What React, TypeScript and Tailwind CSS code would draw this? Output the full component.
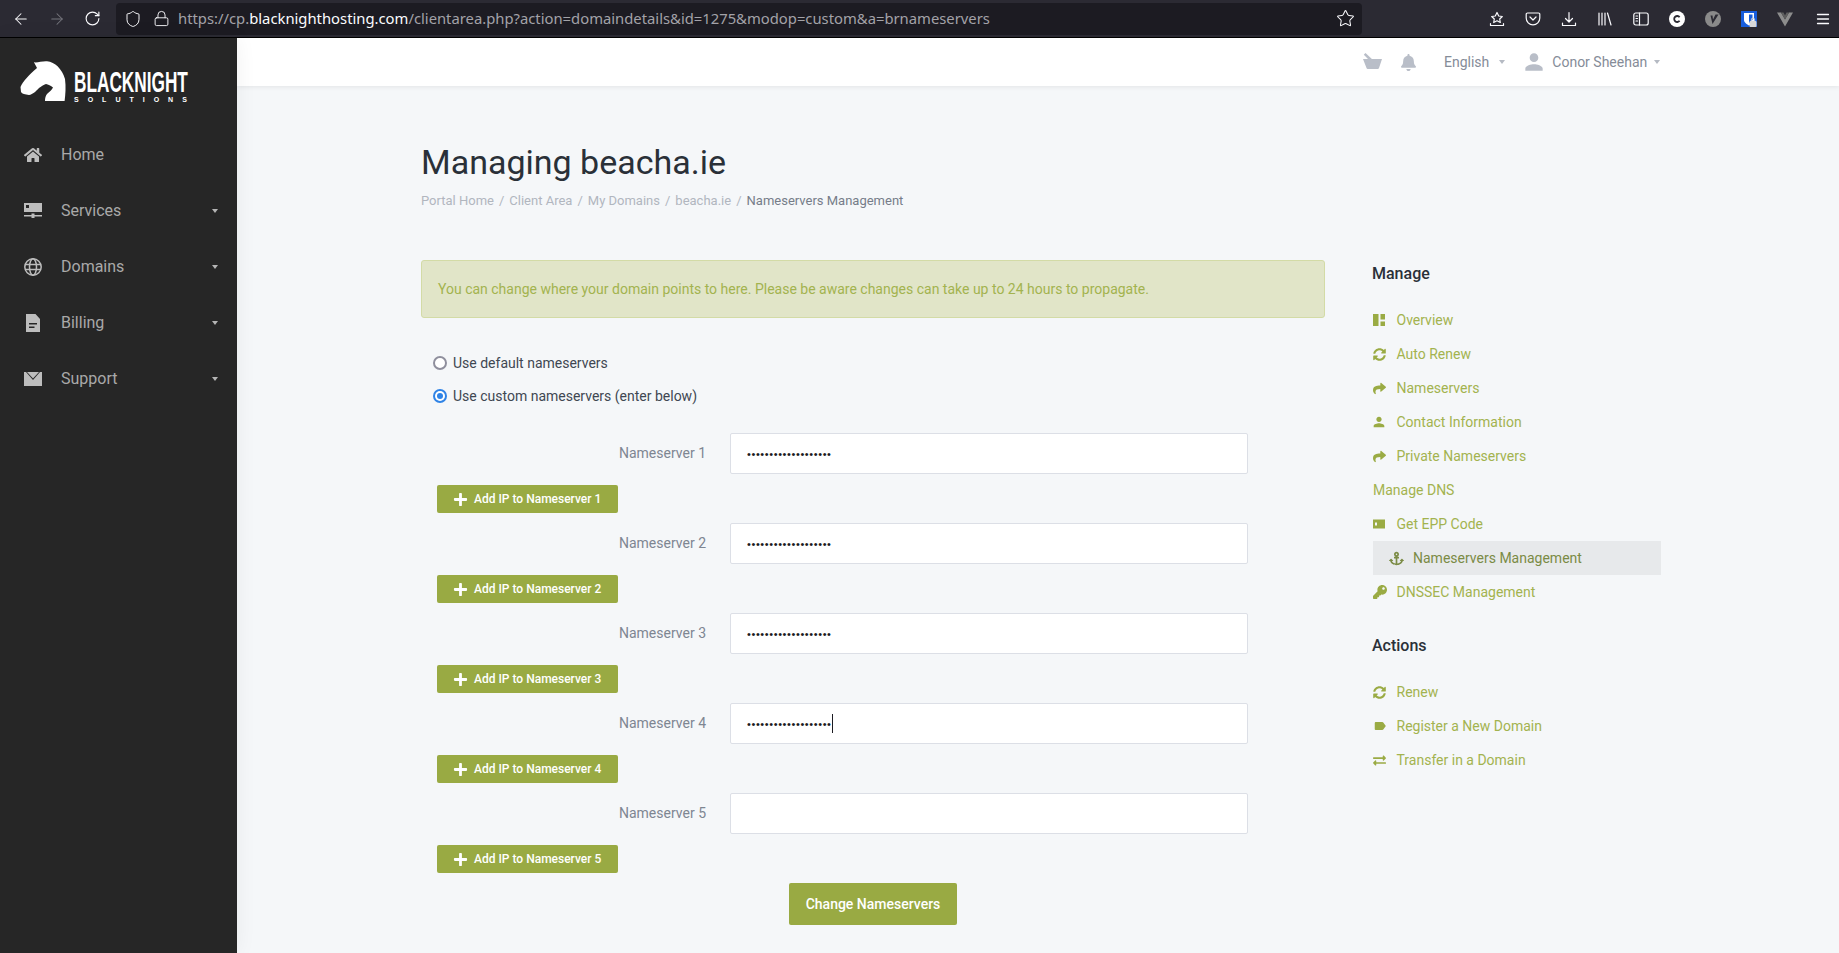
import React from "react";
import { ArrowLeft, ArrowRight, RotateCw, Shield, Lock, Star } from "lucide-react";
import { FaHome, FaBell, FaPlus, FaAnchor, FaKey, FaShare, FaExchangeAlt, FaSyncAlt } from "react-icons/fa";
import { MdPerson, MdLabel } from "react-icons/md";

const Caret = ({ c = "border-t-[#b5bac3]" }: { c?: string }) => (
  <span className={`inline-block w-0 h-0 border-x-[3px] border-t-[4px] border-x-transparent ${c}`} />
);

const TB = ({ children, cls = "" }: { children: React.ReactNode; cls?: string }) => (
  <svg viewBox="0 0 16 16" width="16" height="16" fill="none" stroke="#fbfbfe" strokeWidth="1.2" strokeLinecap="round" strokeLinejoin="round" className={cls}>
    {children}
  </svg>
);

function Toolbar() {
  return (
    <div className="h-[38px] bg-[#2b2a33] border-b border-black flex items-center shrink-0">
      <div className="w-[116px] flex items-center pl-[12px] gap-[18px] shrink-0">
        <ArrowLeft size={18} color="#fbfbfe" strokeWidth={1.4} />
        <ArrowRight size={18} color="#77767e" strokeWidth={1.4} />
        <RotateCw size={17} color="#fbfbfe" strokeWidth={1.6} />
      </div>
      <div className="w-[1246px] h-[32px] bg-[#1c1b22] rounded-[4px] flex items-center pl-[8px] shrink-0">
        <Shield size={18} color="#fbfbfe" strokeWidth={1.3} />
        <Lock size={17} color="#fbfbfe" strokeWidth={1.3} className="ml-[11px]" />
        <span className="ml-[8px] text-[14.8px] text-[#a3a2a8] [font-family:'Noto_Sans',sans-serif] whitespace-nowrap">
          https://cp.<span className="text-[#fbfbfe]">blacknighthosting.com</span>/clientarea.php?action=domaindetails&amp;id=1275&amp;modop=custom&amp;a=brnameservers
        </span>
        <span className="ml-auto mr-[7px]"><Star size={19} color="#fbfbfe" strokeWidth={1.3} /></span>
      </div>
      <div className="flex items-center ml-[127px] gap-[20px]">
        <TB>
          <path d="M8 1.500l1.700 3.500 3.600.5-2.600 2.500.6 3.500L8 9.800 4.700 11.500l.6-3.500L2.700 5.500l3.600-.5z" />
          <path d="M1.500 12.500v2h13v-2" />
        </TB>
        <TB>
          <path d="M2.500 2h11a1.300 1.300 0 0 1 1.300 1.300V7a6.800 6.800 0 0 1-13.600 0V3.300A1.300 1.300 0 0 1 2.500 2z" />
          <path d="M5 6l3 3 3-3" />
        </TB>
        <TB>
          <path d="M8 1.500v9M4.500 7.500L8 11l3.500-3.500" />
          <path d="M1.500 12v2.500h13V12" />
        </TB>
        <TB>
          <path d="M2 2v12M5 2v12M8 2v12M10.500 2l3.500 12" />
        </TB>
        <TB>
          <rect x="0.800" y="2" width="14.400" height="12" rx="2" />
          <path d="M6.500 2v12M3 5h1.500M3 7.500h1.500M3 10h1.500" />
        </TB>
        <svg viewBox="0 0 16 16" width="16" height="16">
          <circle cx="8" cy="8" r="8" fill="#fff" />
          <path d="M10.600 6.200A3 3 0 1 0 10.600 9.800" fill="none" stroke="#2b2a33" strokeWidth="1.800" />
        </svg>
        <svg viewBox="0 0 16 16" width="16" height="16">
          <circle cx="8" cy="8" r="8" fill="#8a8a8a" />
          <path d="M5.500 4.500 7.500 13 13.500 3.500H10.500L8 8.500 7.500 4.500z" fill="#2b2a33" />
        </svg>
        <svg viewBox="0 0 16 16" width="16" height="16">
          <rect width="16" height="16" fill="#175ddc" />
          <path d="M3 2h10v7c0 2.500-3 4.500-5 5.500-2-1-5-3-5-5.500z" fill="#fff" />
          <path d="M8 3.500h3.500V9L8 12z" fill="#175ddc" />
          <rect x="8.500" y="10" width="7" height="6" rx="1" fill="#d8d8d8" />
          <path d="M10.300 10V8.800a1.700 1.700 0 0 1 3.400 0V10" fill="none" stroke="#d8d8d8" strokeWidth="1" />
        </svg>
        <svg viewBox="0 0 16 16" width="16" height="16">
          <path d="M0 1.500h4l4 7 4-7h4L8 15.500z" fill="#8d8d8d" />
          <path d="M4 1.500h2.500L8 4.500l1.500-3H12L8 8.500z" fill="#5f5f5f" />
        </svg>
        <svg viewBox="0 0 16 16" width="16" height="16" className="ml-[2px]" stroke="#fbfbfe" strokeWidth="1.300" strokeLinecap="round">
          <path d="M2.500 3.500h11M2.500 8h11M2.500 12.500h11" />
        </svg>
      </div>
    </div>
  );
}

function Logo() {
  return (
    <svg viewBox="0 0 185 42" width="185" height="42" className="ml-[20px] mt-[23px]" aria-label="Blacknight Solutions">
      <path
        d="M0.500 26 C3 20 9 14 17 7 C15.500 4 14.500 2.500 14 1.300 C18 1.800 22 0 27 0.300 C35 1 42 8 45 18 C46 26 45.500 33 44.600 40 L25 40 C25 37 25.500 35 27 33 C29 31 32 29 33 26.500 C31 24.500 28 23.500 26 23 C23.500 24 21 25.500 19 27 C16 30 13 33.500 9 34 C5 33.500 2 33 1 31 Z"
        fill="#fff"
      />
      <text transform="translate(54 31) scale(0.594 1)" fontFamily="'Liberation Sans',sans-serif" fontWeight="700" fontSize="29" fill="#fff">
        BLACKNIGHT
      </text>
      <text x="54" y="40.500" letterSpacing="9" fontFamily="'Liberation Sans',sans-serif" fontWeight="700" fontSize="7" fill="#fff">
        SOLUTIONS
      </text>
    </svg>
  );
}

const navIcon = "w-[18px] h-[18px] text-[#bdbdbd] shrink-0";
const nav = [
  { label: "Home", caret: false, icon: <FaHome className={navIcon} /> },
  {
    label: "Services",
    caret: true,
    icon: (
      <svg viewBox="0 0 18 18" className={navIcon} fill="currentColor">
        <path d="M0 1h18v9H0z" />
        <rect x="2" y="3" width="3" height="3" fill="#262626" />
        <path d="M0 13h18v1.500H0z" />
        <rect x="7.500" y="11.500" width="3" height="4.500" />
      </svg>
    ),
  },
  {
    label: "Domains",
    caret: true,
    icon: (
      <svg viewBox="0 0 18 18" className={navIcon} fill="none" stroke="currentColor" strokeWidth="1.500">
        <circle cx="9" cy="9" r="8.200" />
        <ellipse cx="9" cy="9" rx="3.500" ry="8.200" />
        <path d="M1 6.500h16M1 11.500h16" />
      </svg>
    ),
  },
  {
    label: "Billing",
    caret: true,
    icon: (
      <svg viewBox="0 0 18 18" className={navIcon} fill="currentColor">
        <path fillRule="evenodd" d="M2 0h9.500L16 5v13H2zM5 9v1.500h8V9zM5 12.500V14h5.500v-1.500z" />
      </svg>
    ),
  },
  {
    label: "Support",
    caret: true,
    icon: (
      <svg viewBox="0 0 18 18" className={navIcon} fill="currentColor">
        <path d="M0 2h2l7 8 7-8h2v14H0z" />
        <path d="M3 2h12l-6 6.500z" />
      </svg>
    ),
  },
];

function Sidebar() {
  return (
    <aside className="w-[237px] shrink-0 bg-[#262626] flex flex-col z-10 shadow-[0_0_20px_rgba(0,0,0,0.06)]">
      <Logo />
      <nav className="mt-[24px]">
        {nav.map((n) => (
          <div key={n.label} className="h-[56px] flex items-center pl-[24px] pr-[19px]">
            {n.icon}
            <span className="ml-[19px] text-[16px] text-[#a9a9a9]">{n.label}</span>
            {n.caret && (
              <span className="ml-auto flex">
                <Caret c="border-t-[#b5b5b5]" />
              </span>
            )}
          </div>
        ))}
      </nav>
    </aside>
  );
}

function Header() {
  return (
    <header className="h-[48px] bg-white shrink-0 z-[5] shadow-[0_1px_5px_rgba(0,0,0,0.08)] flex items-center pl-[1126px] text-[14px] text-[#858c98]">
      <svg viewBox="0 0 19 16" width="19" height="16" fill="#b9bec8" className="shrink-0 mt-[-2px]">
        <path d="M0 6h19l-3 9a1.500 1.500 0 0 1-1.500 1h-9.500a1.500 1.500 0 0 1-1.500-1z" />
        <path d="M2.500 0 11 8 9 10 0.800 1.800z" />
      </svg>
      <FaBell className="ml-[18px] text-[#b9bec8] shrink-0" size={17} />
      <span className="ml-[27px]">English</span>
      <span className="ml-[10px] flex"><Caret /></span>
      <MdPerson className="ml-[16px] text-[#b9bec8] shrink-0" size={26} />
      <span className="ml-[5px]">Conor Sheehan</span>
      <span className="ml-[7px] flex"><Caret /></span>
    </header>
  );
}

const Radio = ({ on, label }: { on?: boolean; label: string }) => (
  <div className="h-[33px] flex items-center pl-[12px]">
    {on ? (
      <span className="relative -top-px w-[14px] h-[14px] rounded-full bg-[#2f83e6] flex items-center justify-center">
        <span className="w-[10px] h-[10px] rounded-full bg-white flex items-center justify-center">
          <span className="w-[6px] h-[6px] rounded-full bg-[#2f83e6]" />
        </span>
      </span>
    ) : (
      <span className="relative -top-px w-[14px] h-[14px] rounded-full border-2 border-[#8f8f9d] bg-white" />
    )}
    <span className="ml-[6px] text-[14px] text-[#3f4752]">{label}</span>
  </div>
);

function NsRow({ n, filled, caret }: { n: number; filled: boolean; caret?: boolean }) {
  return (
    <div>
      <div className="flex items-center h-[41px]">
        <label className="w-[285px] text-right text-[14px] text-[#7e8692]">Nameserver {n}</label>
        <div className="relative ml-[24px] w-[518px] h-[41px]">
          <input
            type="password"
            readOnly
            defaultValue={filled ? "ns1.blacknight.com." : ""}
            className="w-full h-full bg-white border border-[#dcdfe6] rounded-[2px] pl-[16px] text-[11px] tracking-[0.6px] text-[#1c1b22] outline-none [font-family:'Liberation_Sans',sans-serif]"
          />
          {caret && <span className="absolute left-[102px] top-[11px] w-px h-[19px] bg-[#1c1b22]" />}
        </div>
      </div>
      <button className="ml-[16px] mt-[11px] mb-[10px] w-[181px] h-[28px] bg-[#99aa43] rounded-[2px] flex items-center pl-[16px] text-[12px] font-medium text-white">
        <FaPlus size={15} className="shrink-0" />
        <span className="ml-[6px] whitespace-nowrap">Add IP to Nameserver {n}</span>
      </button>
    </div>
  );
}

const ic = "w-[13px] h-[13px] shrink-0";
const manage: { label: string; icon?: React.ReactNode; active?: boolean }[] = [
  {
    label: "Overview",
    icon: (
      <svg viewBox="0 0 12 12" className="w-[12px] h-[12px] shrink-0" fill="currentColor">
        <path d="M0 0h5.500v12H0zM7.500 0H12v5.500H7.500zM7.500 7.500H12V12H7.500z" />
      </svg>
    ),
  },
  { label: "Auto Renew", icon: <FaSyncAlt className={ic} /> },
  { label: "Nameservers", icon: <FaShare className={ic} /> },
  { label: "Contact Information", icon: <MdPerson className="w-[16px] h-[16px] -ml-[2px] shrink-0" /> },
  { label: "Private Nameservers", icon: <FaShare className={ic} /> },
  { label: "Manage DNS" },
  {
    label: "Get EPP Code",
    icon: (
      <svg viewBox="0 0 12 12" className="w-[12px] h-[12px] shrink-0" fill="currentColor">
        <path fillRule="evenodd" d="M0 1.500h12v9H0zM2 4.500v3h2v-3z" />
      </svg>
    ),
  },
  { label: "Nameservers Management", active: true, icon: <FaAnchor className="w-[15px] h-[15px] shrink-0" /> },
  { label: "DNSSEC Management", icon: <FaKey className="w-[14px] h-[14px] shrink-0" /> },
];
const actions = [
  { label: "Renew", icon: <FaSyncAlt className={ic} /> },
  { label: "Register a New Domain", icon: <MdLabel className="w-[14px] h-[14px] shrink-0" /> },
  { label: "Transfer in a Domain", icon: <FaExchangeAlt className={ic} /> },
];

function SideItem({ label, icon, active }: { label: string; icon?: React.ReactNode; active?: boolean }) {
  if (active) {
    return (
      <div className="h-[34px] ml-px w-[288px] bg-[#e7e9eb] flex items-center pl-[16px] text-[14px] text-[#7b8b45]">
        {icon}
        <span className="ml-[9px]">{label}</span>
      </div>
    );
  }
  return (
    <div className="h-[34px] ml-px flex items-center text-[14px] text-[#a3b34f]">
      {icon && <span className="w-[23.5px] flex text-[#9aab44]">{icon}</span>}
      <span>{label}</span>
    </div>
  );
}

export default function App() {
  return (
    <div className="h-screen overflow-hidden flex flex-col [font-family:Roboto,sans-serif] bg-[#f5f7f9]">
      <Toolbar />
      <div className="flex flex-1 min-h-0">
        <Sidebar />
        <div className="flex-1 flex flex-col min-w-0">
          <Header />
          <main className="pl-[184px] pt-[56px]">
            <h1 className="text-[34px] leading-[40px] font-normal text-[#2a3038]">Managing beacha.ie</h1>
            <div className="mt-[9px] h-[20px] flex items-center text-[13px] text-[#b1b6bf]">
              <span>Portal Home</span>
              <span className="mx-[5px]">/</span>
              <span>Client Area</span>
              <span className="mx-[5px]">/</span>
              <span>My Domains</span>
              <span className="mx-[5px]">/</span>
              <span>beacha.ie</span>
              <span className="mx-[5px]">/</span>
              <span className="text-[#767d89]">Nameservers Management</span>
            </div>
            <div className="mt-[49px] flex">
              <div className="w-[904px] shrink-0">
                <div className="h-[58px] bg-[#e1e5c8] border border-[#d3dba6] rounded-[3px] flex items-center pl-[16px] text-[14px] text-[#a3b34f]">
                  You can change where your domain points to here. Please be aware changes can take up to 24 hours to propagate.
                </div>
                <div className="mt-[29px]">
                  <Radio label="Use default nameservers" />
                  <Radio on label="Use custom nameservers (enter below)" />
                </div>
                <div className="mt-[20px]">
                  <NsRow n={1} filled />
                  <NsRow n={2} filled />
                  <NsRow n={3} filled />
                  <NsRow n={4} filled caret />
                  <NsRow n={5} filled={false} />
                </div>
                <div className="flex justify-center">
                  <button className="w-[168px] h-[42px] bg-[#99aa43] rounded-[2px] text-[14px] font-medium text-white">
                    Change Nameservers
                  </button>
                </div>
              </div>
              <div className="ml-[47px] w-[290px] shrink-0">
                <h3 className="mt-px h-[26px] leading-[26px] text-[16px] font-medium text-[#2a3038]">Manage</h3>
                <div className="mt-[16px]">
                  {manage.map((m) => (
                    <SideItem key={m.label} {...m} />
                  ))}
                </div>
                <h3 className="mt-[24px] h-[26px] leading-[26px] text-[16px] font-medium text-[#2a3038]">Actions</h3>
                <div className="mt-[16px]">
                  {actions.map((m) => (
                    <SideItem key={m.label} {...m} />
                  ))}
                </div>
              </div>
            </div>
          </main>
        </div>
      </div>
    </div>
  );
}
